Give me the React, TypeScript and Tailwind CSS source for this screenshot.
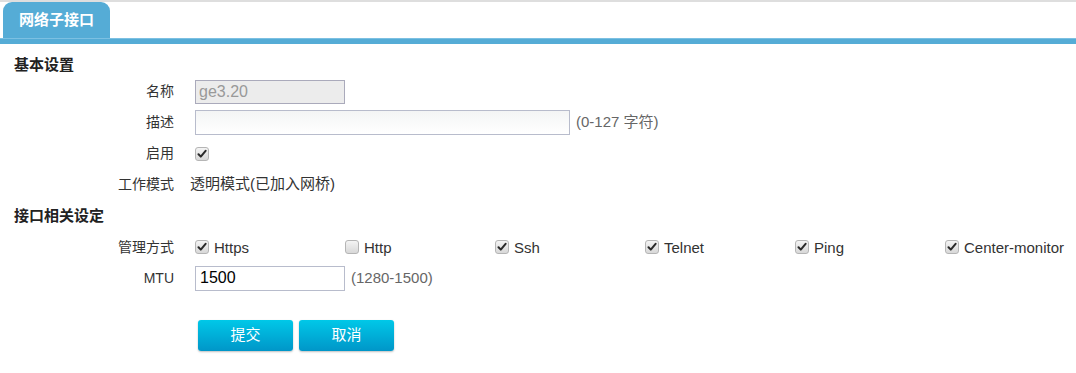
import React from "react";

const font = { fontFamily: '"Liberation Sans", "Noto Sans CJK SC", sans-serif' };

function Check({ checked }: { checked: boolean }) {
  return (
    <span className="inline-flex w-[14px] h-[14px] rounded-[3px] border border-[#b5b5b5] bg-gradient-to-b from-[#f4f4f4] to-[#d8d8d8] items-center justify-center shrink-0">
      {checked && (
        <svg width="10" height="10" viewBox="0 0 10 10">
          <path d="M1.5 5.2 L3.8 7.6 L8.6 1.8" stroke="#2a2a2a" strokeWidth="2" fill="none" strokeLinecap="round" strokeLinejoin="round" />
        </svg>
      )}
    </span>
  );
}

function Row({ label, children, h = 31 }: { label: string; children: React.ReactNode; h?: number }) {
  return (
    <div className="flex items-center" style={{ height: h }}>
      <div className="w-[174px] text-right text-[14px] text-[#333] shrink-0">{label}</div>
      <div className="flex items-center">{children}</div>
    </div>
  );
}

export default function App() {
  const methods: [string, boolean][] = [
    ["Https", true],
    ["Http", false],
    ["Ssh", true],
    ["Telnet", true],
    ["Ping", true],
    ["Center-monitor", true],
  ];
  return (
    <div className="w-[1076px] h-[373px] bg-white" style={font}>
      <div className="h-[2px] bg-[#dedede]" />
      <div className="flex h-[36px] items-end pl-[3px]">
        <div className="w-[107px] h-[36px] bg-[#55acd6] rounded-t-[9px] flex items-center justify-center text-white font-bold text-[15px]">
          网络子接口
        </div>
      </div>
      <div className="h-[6px] bg-[#55acd6] border-t border-[#7cc0e2]" />
      <div className="px-[14px] pt-[9px] text-[15px] font-bold text-[#222] h-[33px] flex items-center">基本设置</div>
      <Row label="名称" h={29}>
        <div className="ml-[21px] w-[150px] h-[24px] border border-[#aab] bg-[#ececec] text-[#999] text-[16px] flex items-center px-[3px]">ge3.20</div>
      </Row>
      <Row label="描述" h={32}>
        <div className="ml-[21px] w-[375px] h-[25px] border border-[#b8bccc] bg-gradient-to-b from-[#f4f5f5] to-white" />
        <span className="ml-[6px] text-[15px] text-[#666]">(0-127 字符)</span>
      </Row>
      <Row label="启用" h={31}>
        <span className="ml-[21px]"><Check checked /></span>
      </Row>
      <Row label="工作模式" h={31}>
        <span className="ml-[16px] text-[15px] text-[#333]">透明模式(已加入网桥)</span>
      </Row>
      <div className="px-[14px] text-[15px] font-bold text-[#222] h-[31px] flex items-center pt-[1px]">接口相关设定</div>
      <Row label="管理方式" h={32}>
        <div className="ml-[21px] flex">
          {methods.map(([name, c]) => (
            <div key={name} className="w-[150px] flex items-center gap-[5px]">
              <Check checked={c} />
              <span className="text-[15px] text-[#333] mt-[3px]">{name}</span>
            </div>
          ))}
        </div>
      </Row>
      <Row label="MTU" h={30}>
        <div className="ml-[21px] w-[150px] h-[25px] border border-[#b8bccc] bg-white text-[#000] text-[16px] flex items-center px-[4px]">1500</div>
        <span className="ml-[6px] text-[15px] text-[#666]">(1280-1500)</span>
      </Row>
      <div className="flex gap-[6px] pl-[198px] pt-[27px]">
        <button className="w-[95px] h-[31px] rounded-[3px] bg-gradient-to-b from-[#00c8e8] to-[#0096c8] text-white text-[15px] shadow-[0_1px_2px_rgba(0,0,0,0.25)]">提交</button>
        <button className="w-[95px] h-[31px] rounded-[3px] bg-gradient-to-b from-[#00c8e8] to-[#0096c8] text-white text-[15px] shadow-[0_1px_2px_rgba(0,0,0,0.25)]">取消</button>
      </div>
    </div>
  );
}
